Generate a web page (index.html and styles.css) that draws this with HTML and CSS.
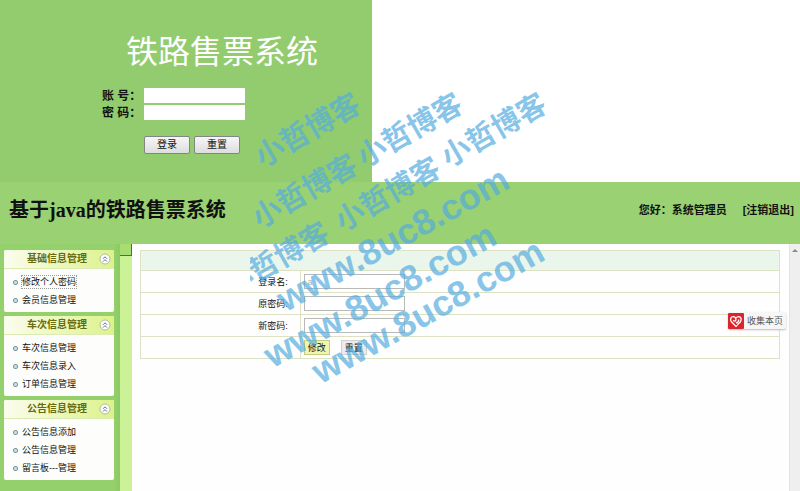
FILE: index.html
```html
<!DOCTYPE html>
<html lang="zh-CN">
<head>
<meta charset="utf-8">
<title>基于java的铁路售票系统</title>
<link rel="stylesheet" href="styles.css">
</head>
<body>
<svg class="defs" width="0" height="0" aria-hidden="true">
  <symbol id="fold" viewBox="0 0 12 12">
    <circle cx="6" cy="6" r="5" fill="#fff" stroke="#b3bb9c"/>
    <path d="M4 5.8 6 3.8 8 5.8M4 8.6 6 6.6 8 8.6" fill="none" stroke="#63708c"/>
  </symbol>
</svg>

<form class="login">
  <h1 class="login-title">铁路售票系统</h1>
  <div class="login-row"><label for="account">账 号：</label><input id="account" type="text"></div>
  <div class="login-row"><label for="pass">密 码：</label><input id="pass" type="password"></div>
  <div class="login-actions">
    <button type="button">登录</button>
    <button type="button">重置</button>
  </div>
</form>

<header class="top">
  <h2 class="top-title">基于java的铁路售票系统</h2>
  <div class="top-user"><span>您好：系统管理员</span><a href="#">[注销退出]</a></div>
</header>

<div class="shell">
  <nav class="side">
    <section class="panel">
      <h3>基础信息管理<svg class="fold"><use href="#fold"/></svg></h3>
      <ul>
        <li><a class="current" href="#">修改个人密码</a></li>
        <li><a href="#">会员信息管理</a></li>
      </ul>
    </section>
    <section class="panel">
      <h3>车次信息管理<svg class="fold"><use href="#fold"/></svg></h3>
      <ul>
        <li><a href="#">车次信息管理</a></li>
        <li><a href="#">车次信息录入</a></li>
        <li><a href="#">订单信息管理</a></li>
      </ul>
    </section>
    <section class="panel">
      <h3>公告信息管理<svg class="fold"><use href="#fold"/></svg></h3>
      <ul>
        <li><a href="#">公告信息添加</a></li>
        <li><a href="#">公告信息管理</a></li>
        <li><a href="#">留言板---管理</a></li>
      </ul>
    </section>
  </nav>
  <div class="divider"><span class="divider-knob"></span></div>
  <main class="content">
    <form>
      <table class="grid">
        <colgroup><col class="col-label"><col></colgroup>
        <thead><tr><th colspan="2"></th></tr></thead>
        <tbody>
          <tr><th><label for="name">登录名:</label></th><td><input id="name" type="text" value="a" disabled></td></tr>
          <tr><th><label for="old">原密码:</label></th><td><input id="old" type="password"></td></tr>
          <tr><th><label for="new">新密码:</label></th><td><input id="new" type="password"></td></tr>
          <tr><th></th><td><div class="actions"><button class="primary" type="button">修改</button><button type="button">重置</button></div></td></tr>
        </tbody>
      </table>
    </form>
  </main>
  <div class="scroll">
    <svg width="10" height="14" viewBox="0 0 10 14"><path d="M2 8 5 5 8 8Z" fill="#8a8a8a"/></svg>
  </div>
</div>

<button class="collect" type="button">
  <svg width="16" height="16" viewBox="0 0 16 16">
    <rect width="16" height="16" rx="1" fill="#d9252c"/>
    <path d="M9.5 12.2 8 13.4 3.4 8.8C1.6 6.4 3 3.6 5.2 3.6 7 3.6 7.9 5 7.9 6.6 7.8 8.4 5.8 8.8 5.4 7.2M8.2 5C9 3.8 10.4 3.4 11.6 3.9 13.6 4.8 13.6 7.2 12.2 9L9.4 11.8M8 10.2Q10.8 9 10.8 6.4" fill="none" stroke="#fff" stroke-width="1.3"/>
  </svg>
  <span>收集本页</span>
</button>

<svg class="mark" width="400" height="360" viewBox="200 60 400 360" aria-hidden="true">
  <clipPath id="tile"><rect x="250" y="60" width="350" height="360"/></clipPath>
  <g class="mark-name">
    <text transform="translate(270 151) rotate(-30)" x="-15" y="11">小哲博客</text>
    <text transform="translate(372 151) rotate(-30)" x="-15" y="11">小哲博客</text>
    <text transform="translate(456 151) rotate(-30)" x="-15" y="11">小哲博客</text>
    <text transform="translate(267 212) rotate(-30)" x="-15" y="11">小哲博客</text>
    <text transform="translate(350 215) rotate(-30)" x="-15" y="11">小哲博客</text>
    <g clip-path="url(#tile)"><text transform="translate(239 280) rotate(-30)" x="-15" y="11">小哲博客</text></g>
  </g>
  <g class="mark-site">
    <text transform="translate(293 297) rotate(-29)" x="-14" y="10">www.8uc8.com</text>
    <text transform="translate(280 353) rotate(-29)" x="-14" y="10">www.8uc8.com</text>
    <text transform="translate(328 369) rotate(-29)" x="-14" y="10">www.8uc8.com</text>
  </g>
</svg>
</body>
</html>
```
FILE: styles.css
```css
* { box-sizing: border-box; }

body {
  margin: 0;
  min-height: 100vh;
  display: flex;
  flex-direction: column;
  position: relative;
  background: #fff;
  color: #111;
  font: 9px/18px "Liberation Sans", "Noto Sans CJK SC", sans-serif;
}

h1, h2, h3, ul { margin: 0; padding: 0; }
ul { list-style: none; }
a { color: inherit; text-decoration: none; }
input, button { margin: 0; font: inherit; }
.defs { position: absolute; }

/* Login */
.login {
  width: 46.5%;
  height: 182px;
  padding: 32px 0 0 102px;
  background: #92cc6e;
}
.login-title {
  margin: 0 0 14px 24px;
  color: #fff;
  font: 400 32px/41px "Liberation Serif", "Noto Sans CJK SC", serif;
}
.login-row {
  display: flex;
  align-items: center;
  height: 17px;
}
.login-row label {
  width: 42px;
  font-size: 12px;
  font-weight: 700;
  white-space: nowrap;
}
.login-row input {
  width: 101px;
  height: 15px;
  padding: 0 2px;
  border: 0;
  background: #fff;
}
.login-actions {
  display: flex;
  gap: 4px;
  margin: 15px 0 0 42px;
}
.login-actions button {
  width: 46px;
  height: 18px;
  padding: 0;
  border: 1px solid #858585;
  border-radius: 2px;
  background: linear-gradient(#f6f6f6, #ddd);
  color: #111;
  font-size: 10px;
  line-height: 14px;
}

/* Header */
.top {
  display: flex;
  justify-content: space-between;
  align-items: center;
  height: 62px;
  padding: 0 6px 6px 9px;
  background: #9ad173;
}
.top-title { font: 700 20px/28px "Liberation Serif", "Noto Sans CJK SC", serif; }
.top-user {
  display: flex;
  gap: 16px;
  font-size: 11px;
  font-weight: 700;
}

/* Frames */
.shell { display: flex; flex: 1; }
.side {
  display: flex;
  flex-direction: column;
  gap: 4px;
  flex: 0 0 120px;
  padding: 6px 6px 10px 4px;
  background: linear-gradient(90deg, #94d06c 95%, #8cc863);
}
.panel {
  border-radius: 2px;
  background: #fdfefc;
  overflow: hidden;
}
.panel h3 {
  display: flex;
  justify-content: space-between;
  align-items: center;
  height: 19px;
  padding: 0 3px 0 23px;
  border-bottom: 1px solid #dcebb4;
  background: linear-gradient(90deg, #fbfdee, #ddf28a);
  color: #686a10;
  font-size: 10px;
}
.fold { width: 12px; height: 12px; }
.panel ul { padding: 4px 0 3px 9px; }
.panel li {
  display: flex;
  align-items: center;
  gap: 4px;
  height: 18px;
}
.panel li::before {
  content: "";
  box-sizing: border-box;
  width: 5px;
  height: 5px;
  border: 1px solid #7d99a4;
  border-radius: 2px;
  background: #c9dde3;
}
.panel li a { line-height: 12px; }
.current { outline: 1px dotted #999; }

.divider {
  flex: 0 0 12px;
  background: #ccf297;
}
.divider-knob {
  display: block;
  height: 12px;
  border: solid #4a7527;
  border-width: 0 1px 1px 0;
  background: #a6de72;
}

.content {
  flex: 1;
  padding: 6px 9px 0 8px;
  background: #fefefe;
}
.grid {
  width: 100%;
  border-collapse: collapse;
  table-layout: fixed;
}
.col-label { width: 25%; }
.grid th, .grid td {
  height: 22px;
  padding: 0 3px;
  border: 1px solid #dde2c4;
}
.grid thead th { height: 20px; background: #eaf5ec; }
.grid tbody th {
  padding-right: 12px;
  text-align: right;
  font-weight: 400;
}
.grid input {
  display: block;
  width: 101px;
  height: 15px;
  padding: 0 3px;
  border: 1px solid #b9b9b9;
  background: #fff;
  color: #aaa;
  line-height: 12px;
}
.actions { display: flex; gap: 11px; }
.actions button {
  width: 26px;
  height: 15px;
  padding: 0;
  border: 1px solid #d0d0d0;
  background: #ececec;
  color: #111;
  line-height: 12px;
}
.actions .primary { border-color: #c5cb82; background: #f1f5ae; }

.scroll {
  flex: 0 0 10px;
  border-left: 1px solid #e4e4e4;
  background: #efefef;
}
.scroll svg { display: block; }

/* Floating button */
.collect {
  position: absolute;
  top: 312px;
  right: 14px;
  display: flex;
  align-items: center;
  gap: 3px;
  height: 17px;
  padding: 0 3px 0 0;
  border: 0;
  border-radius: 2px;
  background: #f6f6f6;
  box-shadow: 0 1px 2px #bbb;
  color: #555;
}

/* Watermark */
.mark {
  position: absolute;
  top: 60px;
  left: 200px;
  pointer-events: none;
  fill: #54acdf;
  fill-opacity: 0.7;
}
.mark-name { font: 700 29px "Noto Sans CJK SC", sans-serif; }
.mark-site { font: 700 36px "Liberation Sans", sans-serif; }
```
